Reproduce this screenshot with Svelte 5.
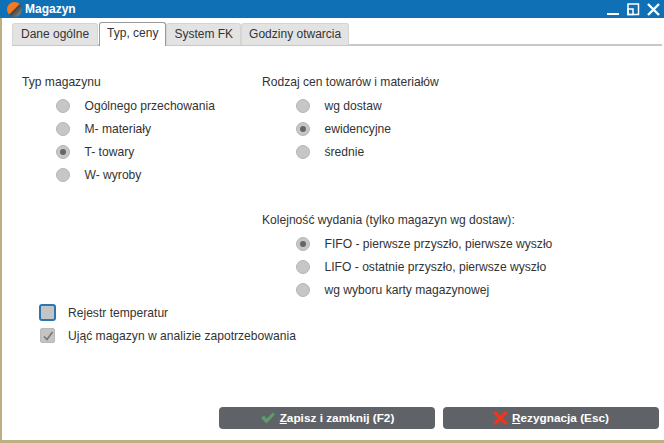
<script>
  const types = [
    { label: 'Ogólnego przechowania' },
    { label: 'M- materiały' },
    { label: 'T- towary', on: true },
    { label: 'W- wyroby' }
  ]
  const prices = [
    { label: 'wg dostaw' },
    { label: 'ewidencyjne', on: true },
    { label: 'średnie' }
  ]
  const order = [
    { label: 'FIFO - pierwsze przyszło, pierwsze wyszło', on: true },
    { label: 'LIFO - ostatnie przyszło, pierwsze wyszło' },
    { label: 'wg wyboru karty magazynowej' }
  ]
  const tabs = ['Dane ogólne', 'Typ, ceny', 'System FK', 'Godziny otwarcia']
</script>

{#snippet radios(items)}
  {#each items as item}
    <div class="radio-row">
      <span class="radio" class:on={item.on}></span>
      <span>{item.label}</span>
    </div>
  {/each}
{/snippet}

<div class="window">
  <header class="titlebar">
    <span class="logo"></span>
    <span class="title">Magazyn</span>
    <span class="win-icons">
      <svg width="13" height="13" viewBox="0 0 13 13"><rect x="0" y="10" width="12" height="2" fill="#fff" /></svg>
      <svg width="13" height="13" viewBox="0 0 13 13" fill="none" stroke="#fff" stroke-width="1.5">
        <rect x="1" y="1" width="10.5" height="10.5" />
        <rect x="1" y="6" width="5" height="5.5" />
      </svg>
      <svg width="13" height="13" viewBox="0 0 13 13" stroke="#fff" stroke-width="2.4"><path d="M1 1 L12 12 M12 1 L1 12" /></svg>
    </span>
  </header>

  <div class="body">
    <nav class="tabs">
      {#each tabs as tab, i}
        <span class="tab" class:active={i === 1}>{tab}</span>
      {/each}
    </nav>

    <div class="columns">
      <section class="col-left">
        <div class="heading">Typ magazynu</div>
        {@render radios(types)}
      </section>
      <section class="col-right">
        <div class="heading">Rodzaj cen towarów i materiałów</div>
        {@render radios(prices)}
        <div class="heading second">Kolejność wydania (tylko magazyn wg dostaw):</div>
        {@render radios(order)}
      </section>
    </div>

    <div class="checks">
      <div class="check-row">
        <span class="check focus"></span>
        <span>Rejestr temperatur</span>
      </div>
      <div class="check-row">
        <span class="check">
          <svg width="12" height="12" viewBox="0 0 12 12" fill="none" stroke="#777" stroke-width="1.6"><path d="M2 6.5 L5 9.5 L10.5 2" /></svg>
        </span>
        <span>Ująć magazyn w analizie zapotrzebowania</span>
      </div>
    </div>

    <footer class="buttons">
      <button class="btn">
        <svg width="16" height="14" viewBox="0 0 16 14"><path d="M1 7 L4 4.5 L6.5 7.5 L13 1.5 L15 3.5 L6.5 12.5 Z" fill="#5f9a6b" /></svg>
        <span><u>Z</u>apisz i zamknij (F2)</span>
      </button>
      <button class="btn">
        <svg width="15" height="14" viewBox="0 0 15 14" stroke="#f0351c" stroke-width="3.4"><path d="M1.5 1 L13.5 13 M13.5 1 L1.5 13" /></svg>
        <span><u>R</u>ezygnacja (Esc)</span>
      </button>
    </footer>
  </div>
</div>

<style>
  :global(body) {
    margin: 0;
    background: #fff;
  }
  .window {
    width: 664px;
    height: 443px;
    box-sizing: border-box;
    display: flex;
    flex-direction: column;
    border-bottom: 3px solid #bcb083;
    font-family: "Liberation Sans", Arial, sans-serif;
    font-size: 12.1px;
    color: #333;
    overflow: hidden;
  }
  .titlebar {
    height: 18px;
    flex: none;
    background: #1070b5;
    display: flex;
    align-items: center;
    padding-left: 7px;
    color: #fff;
  }
  .logo {
    width: 15px;
    height: 15px;
    border-radius: 50%;
    background: linear-gradient(135deg, #f47a20 0 46%, #444 52%, #999 100%);
    margin-right: 3px;
  }
  .title {
    font-weight: bold;
    font-size: 12px;
  }
  .win-icons {
    margin-left: auto;
    display: flex;
    gap: 7px;
    padding-right: 4px;
    align-items: center;
  }
  .win-icons svg {
    display: block;
  }
  .body {
    flex: 1;
    display: flex;
    flex-direction: column;
    background: #fff;
    border-left: 2px solid #bcb083;
  }
  .tabs {
    display: flex;
    margin: 4px 2px 0 10px;
    border-bottom: 2px solid #c8c8c8;
    height: 22px;
    font-size: 12px;
  }
  .tab {
    padding: 3px 7px 0;
    background: #e3e3e3;
    border: 1px solid #d5d5d5;
    border-bottom: none;
    border-radius: 3px 3px 0 0;
    height: 18px;
    margin-top: 1px;
  }
  .tab:first-child {
    padding: 3px 8px 0;
    margin-right: 1px;
  }
  .tab.active {
    background: #fff;
    border: 1px solid #999;
    border-bottom: none;
    margin-top: 0;
    height: 20px;
  }
  .columns {
    display: flex;
    margin-top: 25px;
    padding-left: 20px;
  }
  .col-left {
    width: 240px;
  }
  .heading {
    height: 23px;
    line-height: 23px;
  }
  .heading.second {
    margin-top: 46px;
  }
  .radio-row {
    display: flex;
    align-items: center;
    height: 23px;
    padding-left: 34px;
  }
  .radio {
    width: 14px;
    height: 14px;
    border-radius: 50%;
    background: #c6c6c6;
    border: 1px solid #b6b6b6;
    box-sizing: border-box;
    margin-right: 14.5px;
    position: relative;
  }
  .radio.on::after {
    content: '';
    position: absolute;
    left: 3px;
    top: 3px;
    width: 6px;
    height: 6px;
    border-radius: 50%;
    background: #666;
  }
  .checks {
    padding-left: 38px;
  }
  .check-row {
    display: flex;
    align-items: center;
    height: 23px;
  }
  .check {
    width: 15px;
    height: 15px;
    box-sizing: border-box;
    border-radius: 2px;
    background: #c4c4c4;
    border: 1px solid #b8b8b8;
    margin-right: 13px;
    display: flex;
    align-items: center;
    justify-content: center;
  }
  .check.focus {
    border: 2px solid #2b76b0;
    border-radius: 3px;
    width: 17px;
    height: 17px;
    margin-right: 12px;
    margin-left: -1px;
  }
  .buttons {
    margin-top: auto;
    margin-bottom: 11px;
    display: flex;
    justify-content: flex-end;
    gap: 8px;
    padding-right: 5px;
  }
  .btn {
    width: 216px;
    height: 22px;
    background: #5f6368;
    border: none;
    border-radius: 4px;
    color: #fff;
    font-family: inherit;
    font-size: 11.8px;
    font-weight: bold;
    display: flex;
    align-items: center;
    justify-content: center;
    gap: 4px;
    padding: 0;
  }
</style>
